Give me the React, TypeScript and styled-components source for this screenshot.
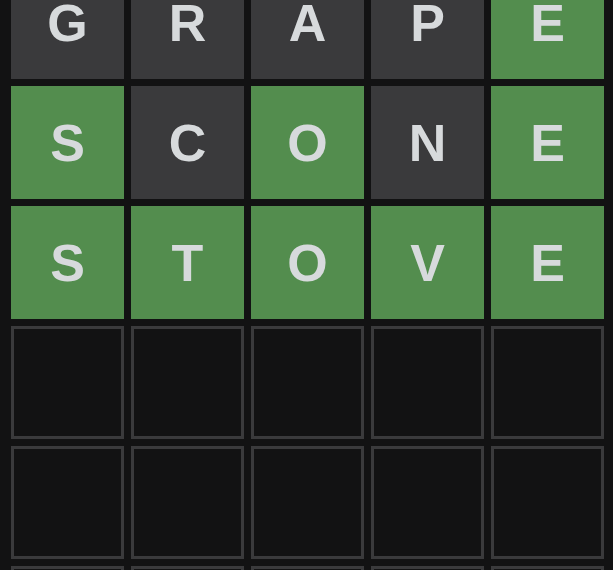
import React from 'react'
import styled, { createGlobalStyle } from 'styled-components'

const GlobalStyle = createGlobalStyle`
  html, body {
    margin: 0;
    padding: 0;
    background: #121213;
    overflow: hidden;
  }
`

const Page = styled.div`
  width: 613px;
  height: 570px;
  overflow: hidden;
  background: #121213;
`

const Board = styled.div`
  display: grid;
  grid-template-columns: repeat(5, 113px);
  grid-auto-rows: 113px;
  column-gap: 7px;
  row-gap: 7px;
  padding-left: 11px;
  margin-top: -34px;
`

type TileState = 'correct' | 'absent' | 'empty'

const colors: Record<TileState, string> = {
  correct: '#538d4e',
  absent: '#3a3a3c',
  empty: '#121213',
}

const Tile = styled.div<{ $state: TileState }>`
  box-sizing: border-box;
  display: flex;
  align-items: center;
  justify-content: center;
  background: ${({ $state }) => colors[$state]};
  border: ${({ $state }) => ($state === 'empty' ? '3px solid #3a3a3c' : 'none')};
  color: #d7dadc;
  font-family: 'Liberation Sans', Arial, sans-serif;
  font-weight: 700;
  font-size: 52px;
  line-height: 1;
  text-transform: uppercase;
`

const guesses: { word: string; states: TileState[] }[] = [
  { word: 'GRAPE', states: ['absent', 'absent', 'absent', 'absent', 'correct'] },
  { word: 'SCONE', states: ['correct', 'absent', 'correct', 'absent', 'correct'] },
  { word: 'STOVE', states: ['correct', 'correct', 'correct', 'correct', 'correct'] },
]

const App = () => {
  const rows = [...guesses]
  while (rows.length < 6) {
    rows.push({ word: '     ', states: Array(5).fill('empty') })
  }
  return (
    <Page>
      <GlobalStyle />
      <Board>
        {rows.map((row, r) =>
          row.states.map((state, c) => (
            <Tile key={`${r}-${c}`} $state={state}>
              {row.word[c].trim()}
            </Tile>
          ))
        )}
      </Board>
    </Page>
  )
}

export default App
